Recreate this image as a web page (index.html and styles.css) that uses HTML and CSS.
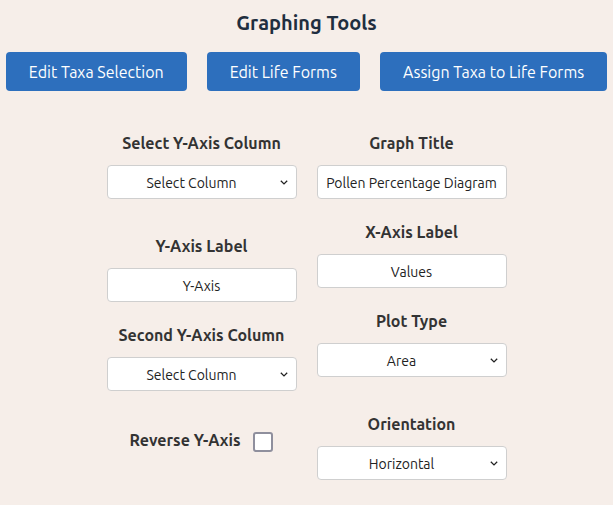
FILE: index.html
```html
<!DOCTYPE html>
<html>
<head>
<meta charset="utf-8">
<link rel="stylesheet" href="styles.css">
</head>
<body>
<div class="page">
  <h2 class="title">Graphing Tools</h2>
  <div class="actions">
    <button class="btn">Edit Taxa Selection</button>
    <button class="btn">Edit Life Forms</button>
    <button class="btn">Assign Taxa to Life Forms</button>
  </div>
  <div class="form">
    <div class="col">
      <div class="field">
        <label class="lbl">Select Y-Axis Column</label>
        <select class="ctrl sel"><option>Select Column</option></select>
      </div>
      <div class="field spaced">
        <label class="lbl">Y-Axis Label</label>
        <input class="ctrl" type="text" value="Y-Axis">
      </div>
      <div class="field">
        <label class="lbl">Second Y-Axis Column</label>
        <select class="ctrl sel"><option>Select Column</option></select>
      </div>
      <div class="check-row">
        <label class="lbl inline">Reverse Y-Axis</label>
        <input class="check" type="checkbox">
      </div>
    </div>
    <div class="col">
      <div class="field">
        <label class="lbl">Graph Title</label>
        <input class="ctrl" type="text" value="Pollen Percentage Diagram">
      </div>
      <div class="field">
        <label class="lbl">X-Axis Label</label>
        <input class="ctrl" type="text" value="Values">
      </div>
      <div class="field">
        <label class="lbl">Plot Type</label>
        <select class="ctrl sel"><option>Area</option></select>
      </div>
      <div class="field spaced">
        <label class="lbl">Orientation</label>
        <select class="ctrl sel"><option>Horizontal</option></select>
      </div>
    </div>
  </div>
</div>
</body>
</html>
```

FILE: styles.css
```css
html, body {
  margin: 0;
  padding: 0;
  background: #f6eee9;
}
body {
  font-family: "Ubuntu", "Lato", "Open Sans", sans-serif;
  color: #333;
}
.page {
  padding-top: 11px;
}
.title {
  margin: 0;
  text-align: center;
  font-size: 20px;
  line-height: 24px;
  font-weight: 700;
  color: #1f2e3f;
}
.actions {
  display: flex;
  justify-content: center;
  gap: 20px;
  margin-top: 17px;
}
.btn {
  height: 39px;
  padding: 0 23px;
  border: none;
  border-radius: 4px;
  background: #2d6fbd;
  color: #fff;
  font-family: inherit;
  font-size: 16px;
}
.form {
  display: flex;
  justify-content: center;
  gap: 20px;
  margin-top: 42px;
}
.col {
  width: 190px;
  display: flex;
  flex-direction: column;
  gap: 23px;
}
.field {
  display: flex;
  flex-direction: column;
  align-items: stretch;
}
.field.spaced {
  margin-top: 14px;
}
.lbl {
  display: block;
  text-align: center;
  font-size: 16px;
  line-height: 20px;
  font-weight: 700;
  color: #333;
  margin-bottom: 12px;
}
.lbl.inline {
  margin: 0;
}
.ctrl {
  box-sizing: border-box;
  width: 190px;
  height: 34px;
  border: 1px solid #cfcfcf;
  border-radius: 4px;
  background-color: #fff;
  font-family: inherit;
  font-size: 14px;
  color: #222;
  text-align: center;
  padding: 2px 4px 0 4px;
  margin: 0;
}
.sel {
  appearance: none;
  -webkit-appearance: none;
  text-align-last: center;
  padding-right: 24px;
  background-image: url("data:image/svg+xml;utf8,<svg xmlns='http://www.w3.org/2000/svg' width='8' height='5' viewBox='0 0 8 5'><path d='M0.8 0.8 L4 3.9 L7.2 0.8' fill='none' stroke='%23222' stroke-width='1.3'/></svg>");
  background-repeat: no-repeat;
  background-position: right 8px center;
}
.check-row {
  display: flex;
  justify-content: center;
  align-items: center;
  gap: 13px;
  margin-top: 14px;
}
.check {
  appearance: none;
  -webkit-appearance: none;
  width: 20px;
  height: 20px;
  margin: 4px 0 0 0;
  border: 2px solid #8f8f9d;
  border-radius: 3px;
  background: #fff;
  box-sizing: border-box;
}
```
